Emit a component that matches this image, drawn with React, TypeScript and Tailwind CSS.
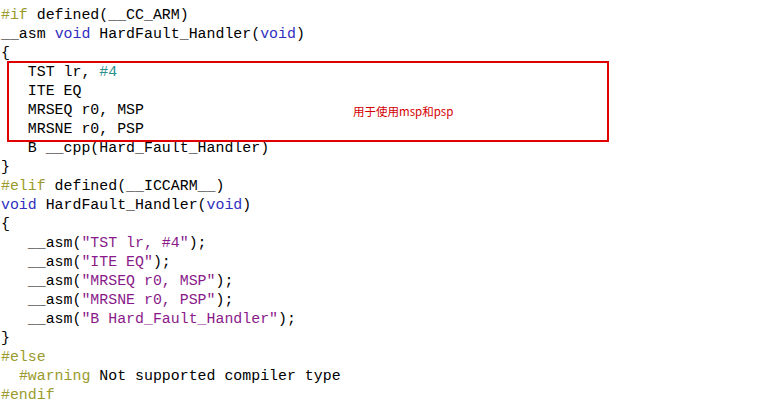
import React from 'react';

const PP = 'text-[#9a9a2e]';
const KW = 'text-[#2f2fbf]';
const STR = 'text-[#8a1a8a]';
const NUM = 'text-[#2a8f8f]';

type Seg = [string, string?];

const lines: Seg[][] = [
  [['#if', PP], [' defined(__CC_ARM)']],
  [['__asm '], ['void', KW], [' HardFault_Handler('], ['void', KW], [')']],
  [['{']],
  [['   TST lr, '], ['#4', NUM]],
  [['   ITE EQ']],
  [['   MRSEQ r0, MSP']],
  [['   MRSNE r0, PSP']],
  [['   B __cpp(Hard_Fault_Handler)']],
  [['}']],
  [['#elif', PP], [' defined(__ICCARM__)']],
  [['void', KW], [' HardFault_Handler('], ['void', KW], [')']],
  [['{']],
  [['   __asm('], ['"TST lr, #4"', STR], [');']],
  [['   __asm('], ['"ITE EQ"', STR], [');']],
  [['   __asm('], ['"MRSEQ r0, MSP"', STR], [');']],
  [['   __asm('], ['"MRSNE r0, PSP"', STR], [');']],
  [['   __asm('], ['"B Hard_Fault_Handler"', STR], [');']],
  [['}']],
  [['#else', PP]],
  [['  '], ['#warning', PP], [' Not supported compiler type']],
  [['#endif', PP]],
];

export default function App() {
  return (
    <div className="relative w-[759px] h-[414px] bg-white overflow-hidden">
      <pre className="pt-[6px] pl-[1px] font-['Liberation_Mono',monospace] text-[14.9px] leading-[19px] text-black">
        {lines.map((segs, i) => (
          <div key={i} className="h-[19px] whitespace-pre">
            {segs.map(([t, c], j) => (
              <span key={j} className={c}>{t}</span>
            ))}
          </div>
        ))}
      </pre>

      {/* annotation box */}
      <div className="absolute left-[7px] top-[61px] w-[602px] h-[81px] border-2 border-[#e00000]">
        <span className="absolute left-[344px] top-[40px] font-['Noto_Sans_CJK_SC',sans-serif] text-[11.5px] leading-[16px] text-[#d40000]">
          用于使用msp和psp
        </span>
      </div>
    </div>
  );
}
